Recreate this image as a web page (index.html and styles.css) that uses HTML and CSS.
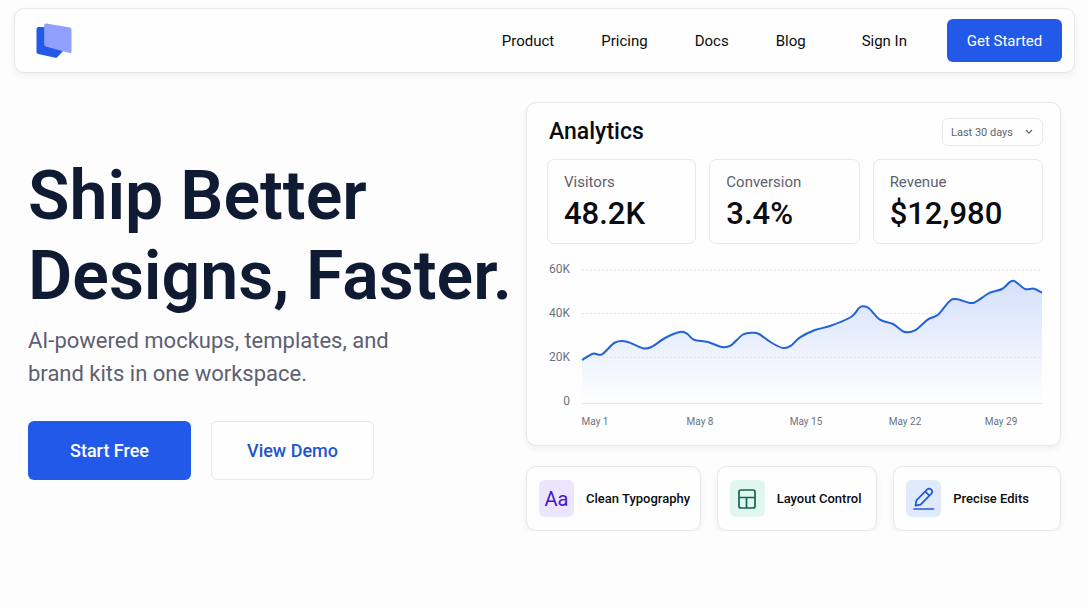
FILE: index.html
```html
<!DOCTYPE html>
<html lang="en">
<head>
  <meta charset="utf-8">
  <meta name="viewport" content="width=device-width, initial-scale=1.0">
  <title>Ship Better Designs, Faster.</title>
  <link rel="stylesheet" href="styles.css">
</head>
<body>
  <header class="topbar">
    <a class="logo" href="#" aria-label="Home">
      <svg width="36" height="36" viewBox="0 0 36 36">
        <path d="M2.5 4H12L28 27L21 34.4Q20.3 35 19.4 34.8L2.2 31Q.5 30.6 .5 29V6Q.5 4.300 2.500 4Z" fill="#2259e8"/>
        <path d="M10.200 .6L34 4.600Q35.500 5 35.500 6.500V28.500Q35.500 30.500 33.500 30L9.800 23.400Q8.200 22.900 8.200 21.400V2.200Q8.200 .3 10.200 .6Z" fill="#929ffd"/>
      </svg>
    </a>
    <nav class="nav">
      <a href="#">Product</a>
      <a href="#">Pricing</a>
      <a href="#">Docs</a>
      <a href="#">Blog</a>
    </nav>
    <div class="account">
      <a href="#">Sign In</a>
      <button class="btn btn-small btn-primary">Get Started</button>
    </div>
  </header>

  <main class="hero">
    <section class="intro">
      <h1>Ship Better<br>Designs, Faster.</h1>
      <p>AI-powered mockups, templates, and<br>brand kits in one workspace.</p>
      <div class="actions">
        <button class="btn btn-primary">Start Free</button>
        <button class="btn btn-outline">View Demo</button>
      </div>
    </section>

    <section class="preview">
      <div class="card analytics">
        <div class="analytics-head">
          <h2>Analytics</h2>
          <div class="range">
            <select aria-label="Date range">
              <option>Last 30 days</option>
            </select>
            <svg width="8" height="6" viewBox="0 0 8 6"><path d="M1 1L4 4.200L7 1" fill="none" stroke="#5d6472" stroke-width="1.100"/></svg>
          </div>
        </div>
        <div class="stats">
          <div class="stat"><span>Visitors</span><strong>48.2K</strong></div>
          <div class="stat"><span>Conversion</span><strong>3.4%</strong></div>
          <div class="stat"><span>Revenue</span><strong>$12,980</strong></div>
        </div>
        <svg class="chart" viewBox="0 0 496 172">
          <defs>
            <linearGradient id="fill" gradientUnits="userSpaceOnUse" x1="0" y1="22" x2="0" y2="145">
              <stop offset="0" stop-color="#2563eb" stop-opacity=".19"/>
              <stop offset="1" stop-color="#2563eb" stop-opacity="0"/>
            </linearGradient>
          </defs>
          <path class="area" fill="url(#fill)"/>
          <path class="grid" d="M35 12H495M35 55.500H495M35 99.500H495"/>
          <path class="axis" d="M35 145.500H495"/>
          <path class="line"/>
          <g class="ticks-y">
            <text x="23" y="15">60K</text>
            <text x="23" y="59">40K</text>
            <text x="23" y="103">20K</text>
            <text x="23" y="147">0</text>
          </g>
          <g class="ticks-x">
            <text x="48" y="167">May 1</text>
            <text x="153" y="167">May 8</text>
            <text x="259" y="167">May 15</text>
            <text x="358" y="167">May 22</text>
            <text x="454" y="167">May 29</text>
          </g>
        </svg>
      </div>

      <div class="features">
        <div class="card feature">
          <span class="icon icon-type">Aa</span>
          <span>Clean Typography</span>
        </div>
        <div class="card feature">
          <span class="icon icon-layout">
            <svg width="18" height="20" viewBox="0 0 18 20"><path d="M3 1H15Q17 1 17 3V17Q17 19 15 19H3Q1 19 1 17V3Q1 1 3 1ZM1 8.500H17M8.500 8.500V19" fill="none" stroke="#12644f" stroke-width="1.700"/></svg>
          </span>
          <span>Layout Control</span>
        </div>
        <div class="card feature">
          <span class="icon icon-edit">
            <svg width="22" height="24" viewBox="0 0 22 24"><path d="M2.500 18.700L3.400 13.400L14.300 2.300Q16.300 .6 18.300 2.600Q20.100 4.600 18.400 6.600L7.600 17.600ZM12.300 4.500L16.300 8.700M1 22H20.500" fill="none" stroke="#2259d8" stroke-width="1.700" stroke-linecap="round" stroke-linejoin="round"/></svg>
          </span>
          <span>Precise Edits</span>
        </div>
      </div>
    </section>
  </main>
  <script src="chart.js"></script>
</body>
</html>
```
FILE: styles.css
```css
:root {
  --blue: #2259e8;
  --border: #e7e8eb;
  --ink: #0b0c0f;
  --navy: #0f1a33;
  --muted: #5d6070;
}
* {
  box-sizing: border-box;
}
body {
  margin: 0;
  padding: 8px 13px 0 14px;
  background-color: #fdfdfe;
  color: var(--ink);
  font-family: Roboto, "Liberation Sans", sans-serif;
}
h1, h2, p {
  margin: 0;
}
a {
  color: inherit;
  text-decoration: none;
}
.topbar {
  display: flex;
  align-items: center;
  height: 65px;
  padding: 0 12px 0 21px;
  border: 1px solid var(--border);
  border-radius: 10px;
  background-color: #fefefe;
  box-shadow: 0 3px 6px rgba(15, 26, 51, 0.06);
  font-size: 15px;
}
.logo {
  display: flex;
}
.nav {
  display: flex;
  gap: 47px;
  margin-left: auto;
}
.account {
  display: flex;
  align-items: center;
  gap: 40px;
  margin-left: 56px;
}
.btn {
  height: 59px;
  border: 1px solid transparent;
  border-radius: 6px;
  font: 500 18px Roboto, "Liberation Sans", sans-serif;
  cursor: pointer;
}
.btn-primary {
  background-color: var(--blue);
  color: #fff;
}
.btn-outline {
  border-color: var(--border);
  background-color: #fefefe;
  color: #1f55cf;
}
.btn-small {
  width: 115px;
  height: 43px;
  padding: 0;
  font-size: 15px;
  font-weight: 400;
}
.hero {
  display: grid;
  grid-template-columns: 1fr 535px;
  padding: 29px 14px 0;
}
.intro {
  padding-top: 54px;
}
.intro h1 {
  color: var(--navy);
  font-size: 68px;
  font-weight: 600;
  line-height: 80px;
  white-space: nowrap;
}
.intro p {
  margin-top: 8px;
  color: var(--muted);
  font-size: 22px;
  line-height: 33px;
}
.actions {
  display: flex;
  gap: 20px;
  margin-top: 31px;
}
.actions .btn {
  width: 163px;
}
.card {
  border: 1px solid var(--border);
  border-radius: 10px;
  background-color: #fefefe;
  box-shadow: 0 3px 6px rgba(15, 26, 51, 0.06);
}
.analytics {
  padding: 15px 17px 15px 20px;
}
.analytics-head {
  display: flex;
  justify-content: space-between;
  align-items: center;
}
.analytics h2 {
  padding-left: 2px;
  font-size: 23px;
  font-weight: 500;
  line-height: 28px;
}
.range {
  position: relative;
}
.range select {
  width: 101px;
  height: 28px;
  padding: 0 8px;
  border: 1px solid var(--border);
  border-radius: 6px;
  background-color: #fefefe;
  color: #5d6472;
  font: 11px Roboto, "Liberation Sans", sans-serif;
  appearance: none;
}
.range svg {
  position: absolute;
  top: 11px;
  right: 10px;
  pointer-events: none;
}
.stats {
  display: grid;
  grid-template-columns: 149fr 150fr 170fr;
  gap: 13px;
  margin-top: 13px;
}
.stat {
  display: flex;
  flex-direction: column;
  padding: 12px 16px;
  border: 1px solid var(--border);
  border-radius: 7px;
}
.stat span {
  color: var(--muted);
  font-size: 15px;
  line-height: 20px;
}
.stat strong {
  margin-top: 4px;
  font-size: 31px;
  font-weight: 500;
  line-height: 35px;
}
.chart {
  display: block;
  width: 100%;
  margin-top: 14px;
}
.chart text {
  fill: #6b7280;
}
.ticks-y {
  font-size: 12px;
  text-anchor: end;
}
.ticks-x {
  font-size: 10px;
  text-anchor: middle;
}
.grid {
  stroke: #dfe2e8;
  stroke-dasharray: 2 2;
}
.axis {
  stroke: var(--border);
}
.line {
  fill: none;
  stroke: #2263dc;
  stroke-width: 2;
}
.features {
  display: grid;
  grid-template-columns: 175fr 161fr 168fr;
  gap: 16px;
  margin-top: 20px;
}
.feature {
  display: flex;
  align-items: center;
  gap: 12px;
  height: 65px;
  padding: 0 8px 0 12px;
  font-size: 13px;
  font-weight: 500;
  white-space: nowrap;
}
.icon {
  display: flex;
  justify-content: center;
  align-items: center;
  width: 35px;
  height: 37px;
  border-radius: 6px;
}
.icon-type {
  background-color: #ebe5fd;
  color: #4c12cc;
  font-size: 20px;
  font-weight: 400;
}
.icon-layout {
  background-color: #e0f6ee;
}
.icon-edit {
  background-color: #e0eafd;
}
```
FILE: chart.js
```js
// [x, y] in chart viewBox units
const points = [
  [35, 102], [46, 95.7], [55, 96.3], [68, 84.5], [80, 83.7], [96, 90.3],
  [105, 88.7], [118, 80], [133, 74], [140, 75.7], [147, 81.7], [161, 84],
  [175, 89], [184, 87.3], [196, 76.500], [206, 74.7], [212, 76], [225, 85],
  [236, 90], [244, 87.7], [253, 79.3], [268, 72], [283, 68], [304, 59],
  [312, 50], [316, 48.3], [322, 50.3], [333, 61.7], [346, 66], [357, 73.7],
  [368, 72.3], [381, 61.3], [391, 56.7], [402, 43.7], [409, 41], [423, 45],
  [429, 43.7], [443, 34.7], [455, 31], [463, 23.9], [468, 23.3], [478, 31],
  [487, 30.7], [495, 34.7]
];

// smooth curve through every point
let line = `M${points[0]}`;
for (let i = 0; i < points.length - 1; i++) {
  const p0 = points[i - 1] || points[i];
  const p1 = points[i];
  const p2 = points[i + 1];
  const p3 = points[i + 2] || p2;
  const c1 = [p1[0] + (p2[0] - p0[0]) / 6, p1[1] + (p2[1] - p0[1]) / 6];
  const c2 = [p2[0] - (p3[0] - p1[0]) / 6, p2[1] - (p3[1] - p1[1]) / 6];
  line += `C${c1} ${c2} ${p2}`;
}
document.querySelector(".line").setAttribute("d", line);
document.querySelector(".area").setAttribute("d", `${line}V145H35Z`);
```
